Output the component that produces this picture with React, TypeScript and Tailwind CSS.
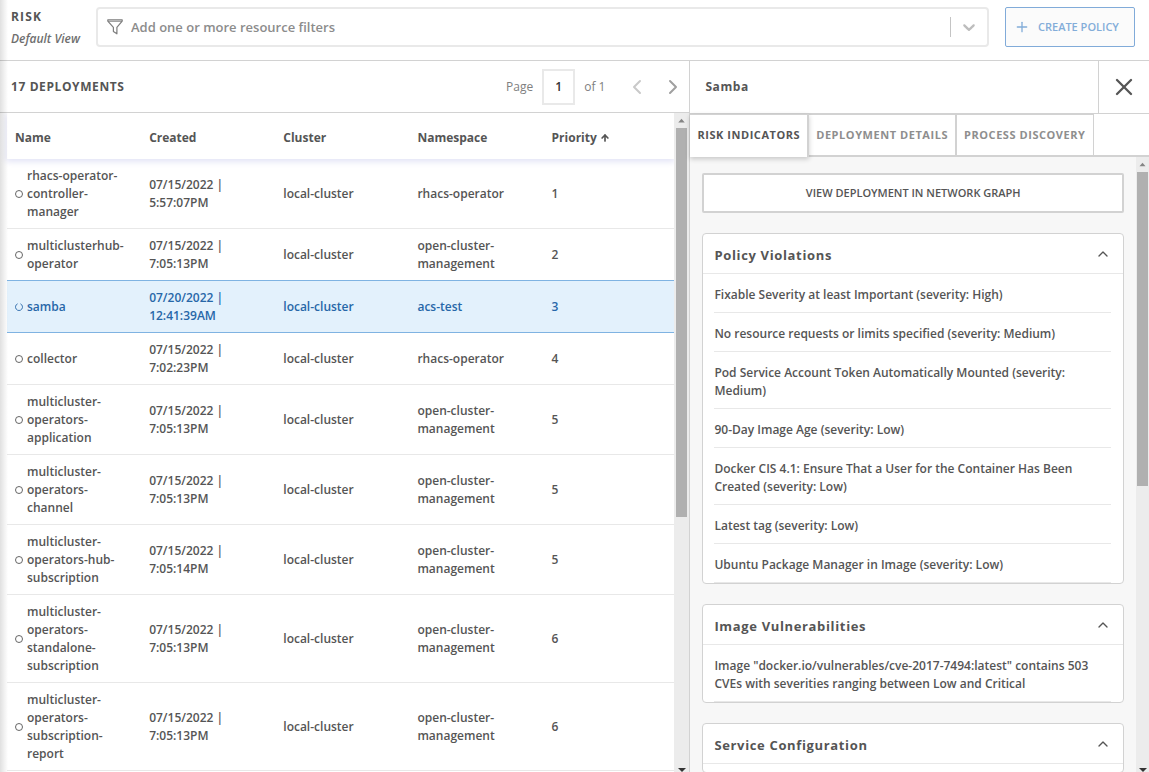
import React, { useState } from 'react';
import { clsx } from 'clsx';
import { ArrowUp, ChevronLeft, ChevronRight, ChevronUp, Plus, X } from 'lucide-react';

type Deployment = {
  name: string;
  date: string;
  time: string;
  cluster: string;
  namespace: string;
  priority: number;
};

const deployments: Deployment[] = [
  { name: 'rhacs-operator-controller-manager', date: '07/15/2022', time: '5:57:07PM', cluster: 'local-cluster', namespace: 'rhacs-operator', priority: 1 },
  { name: 'multiclusterhub-operator', date: '07/15/2022', time: '7:05:13PM', cluster: 'local-cluster', namespace: 'open-cluster-management', priority: 2 },
  { name: 'samba', date: '07/20/2022', time: '12:41:39AM', cluster: 'local-cluster', namespace: 'acs-test', priority: 3 },
  { name: 'collector', date: '07/15/2022', time: '7:02:23PM', cluster: 'local-cluster', namespace: 'rhacs-operator', priority: 4 },
  { name: 'multicluster-operators-application', date: '07/15/2022', time: '7:05:13PM', cluster: 'local-cluster', namespace: 'open-cluster-management', priority: 5 },
  { name: 'multicluster-operators-channel', date: '07/15/2022', time: '7:05:13PM', cluster: 'local-cluster', namespace: 'open-cluster-management', priority: 5 },
  { name: 'multicluster-operators-hub-subscription', date: '07/15/2022', time: '7:05:14PM', cluster: 'local-cluster', namespace: 'open-cluster-management', priority: 5 },
  { name: 'multicluster-operators-standalone-subscription', date: '07/15/2022', time: '7:05:13PM', cluster: 'local-cluster', namespace: 'open-cluster-management', priority: 6 },
  { name: 'multicluster-operators-subscription-report', date: '07/15/2022', time: '7:05:13PM', cluster: 'local-cluster', namespace: 'open-cluster-management', priority: 6 },
];

const riskGroups = [
  {
    title: 'Policy Violations',
    items: [
      'Fixable Severity at least Important (severity: High)',
      'No resource requests or limits specified (severity: Medium)',
      'Pod Service Account Token Automatically Mounted (severity: Medium)',
      '90-Day Image Age (severity: Low)',
      'Docker CIS 4.1: Ensure That a User for the Container Has Been Created (severity: Low)',
      'Latest tag (severity: Low)',
      'Ubuntu Package Manager in Image (severity: Low)',
    ],
  },
  {
    title: 'Image Vulnerabilities',
    items: ['Image "docker.io/vulnerables/cve-2017-7494:latest" contains 503 CVEs with severities ranging between Low and Critical'],
  },
  { title: 'Service Configuration', items: [] },
];

const tabs = ['Risk Indicators', 'Deployment Details', 'Process Discovery'];

function FilterIcon() {
  return (
    <svg className="h-4 w-4 shrink-0 text-[#7d7d7d]" viewBox="0 0 16 16" fill="none" stroke="currentColor" strokeWidth="1.2" strokeLinejoin="round">
      <path d="M.8.9h14.4v1.2L9.9 8.4v6.4L6.4 12.4V8.4L.8 2.1z" />
      <path d="M1 2.4h14" strokeWidth=".8" />
    </svg>
  );
}

function StatusIcon({ open }: { open: boolean }) {
  return (
    <svg className="h-2 w-2 shrink-0" viewBox="0 0 8 8" fill="none" stroke="currentColor" strokeWidth=".9">
      {open ? <path d="M2.6.8A3.5 3.5 0 1 0 5.4.8" /> : <circle cx="4" cy="4" r="3.5" />}
    </svg>
  );
}

function Scrollbar({ thumb, className }: { thumb: string; className?: string }) {
  return (
    <div aria-hidden="true" className={clsx('flex shrink-0 flex-col items-center overflow-hidden bg-[#ececec]', className)}>
      <svg className="h-[15px] w-full shrink-0" viewBox="0 0 15 16" fill="#858585">
        <path d="M4 10h7L7.5 6z" />
      </svg>
      <div className={clsx('w-[11px] bg-[#b0b0b0]', thumb)} />
      <svg className="mt-auto h-1 w-2 shrink-0" viewBox="0 0 8 4" fill="#333">
        <path d="M0 0h8L4 4z" />
      </svg>
    </div>
  );
}

function Header() {
  return (
    <header className="flex shrink-0 items-center border-b border-[#d2d2d2] pt-[7px] pr-3.5 pb-[13px] pl-[11px]">
      <div className="h-10 w-[85px] shrink-0 pt-px">
        <h1 className="font-bold tracking-widest uppercase">Risk</h1>
        <p className="mt-1 text-[#6f6f6f] italic">Default View</p>
      </div>
      <div className="flex h-10 min-w-0 flex-1 items-center rounded border-2 border-[#e9e9e9] pl-[9px]">
        <FilterIcon />
        <input
          type="text"
          aria-label="Resource filters"
          placeholder="Add one or more resource filters"
          className="ml-2 min-w-0 flex-1 bg-transparent text-[13px] outline-none placeholder:text-[#8c8c8c]"
        />
        <button type="button" aria-label="Open filters" className="flex h-5 w-[37px] items-center justify-center border-l border-[#c4c4c4] text-[#bdbdbd]">
          <svg className="h-5 w-5" viewBox="0 0 20 20" fill="currentColor">
            <path d="M4.516 7.548c0.436-0.446 1.043-0.481 1.576 0l3.908 3.747 3.908-3.747c0.533-0.481 1.141-0.446 1.574 0 0.436 0.445 0.408 1.197 0 1.615-0.406 0.418-4.695 4.502-4.695 4.502-0.217 0.223-0.502 0.335-0.787 0.335s-0.57-0.112-0.789-0.335c0 0-4.287-4.084-4.695-4.502s-0.436-1.17 0-1.615z" />
          </svg>
        </button>
      </div>
      <button type="button" className="ml-4 flex h-10 w-[130px] shrink-0 items-center gap-2 rounded-xs border border-[#81abd9] bg-[#fbfbfb] pl-2 text-[11px] text-[#83add9] uppercase">
        <Plus className="h-4 w-4" strokeWidth={2} />
        Create Policy
      </button>
    </header>
  );
}

function DeploymentTable({ selected, onSelect }: { selected: string; onSelect: (name: string) => void }) {
  return (
    <div className="flex min-h-0 flex-1">
      <div className="min-w-0 flex-1 overflow-hidden pl-[7px]">
        <table className="w-full table-fixed border-separate border-spacing-0 text-left">
          <thead>
            <tr className="shadow-[0_2px_6px_1px_#e4e5f6]">
              <th className="w-[20.1%] px-2 pt-4 pb-3">Name</th>
              <th className="w-[20.1%] px-2 pt-4 pb-3">Created</th>
              <th className="w-[20.1%] px-2 pt-4 pb-3">Cluster</th>
              <th className="w-[20.1%] px-2 pt-4 pb-3">Namespace</th>
              <th className="px-2 pt-4 pb-3">
                <span className="flex items-center gap-[3px]">
                  Priority <ArrowUp className="h-2.5 w-2.5" strokeWidth={4} />
                </span>
              </th>
            </tr>
          </thead>
          <tbody>
            {deployments.map((d, i) => {
              const active = d.name === selected;
              const edge = active || deployments[i + 1]?.name === selected;
              const cell = clsx('border-b px-2 pt-2 pb-[7px]', edge ? 'border-[#7fb3e2]' : 'border-[#e8e8e8]');
              return (
                <tr
                  key={d.name}
                  onClick={() => onSelect(d.name)}
                  className={clsx('cursor-pointer', active && 'bg-[#e3f1fc] text-[#2767a8]')}
                >
                  <td className={cell}>
                    <div className="flex items-center gap-1">
                      <StatusIcon open={active} />
                      <span className="min-w-0">{d.name}</span>
                    </div>
                  </td>
                  <td className={cell}>{d.date} | {d.time}</td>
                  <td className={cell}>{d.cluster}</td>
                  <td className={cell}>{d.namespace}</td>
                  <td className={cell}>{d.priority}</td>
                </tr>
              );
            })}
          </tbody>
        </table>
      </div>
      <Scrollbar className="w-[15px]" thumb="h-[59%]" />
    </div>
  );
}

function RiskCard({ title, items }: { title: string; items: string[] }) {
  const [open, setOpen] = useState(true);

  return (
    <section className="mt-5 rounded border border-[#d2d2d2] bg-white">
      <button
        type="button"
        aria-expanded={open}
        onClick={() => setOpen(!open)}
        className="flex h-10 w-full items-center justify-between border-b border-[#e8e8e8] pr-3 pl-[11px]"
      >
        <span className="pt-0.5 text-[13px] font-bold tracking-wider">{title}</span>
        <ChevronUp className={clsx('h-4 w-4', !open && 'rotate-180')} strokeWidth={2} />
      </button>
      {open && (
        <ul className="min-h-2 pr-3 pl-[11px]">
          {items.map((item) => (
            <li key={item} className="border-b border-[#e8e8e8] pt-3 pb-2">{item}</li>
          ))}
        </ul>
      )}
    </section>
  );
}

function DetailsPanel() {
  const [tab, setTab] = useState(tabs[0]);

  return (
    <aside className="flex w-2/5 shrink-0 flex-col border-l border-[#d2d2d2]">
      <div className="flex h-[53px] shrink-0 items-center border-b border-[#d2d2d2]">
        <h2 className="flex-1 pl-[15px] font-bold tracking-wider">Samba</h2>
        <button type="button" aria-label="Close" className="flex h-full w-[51px] items-center justify-center border-l border-[#d2d2d2]">
          <X className="h-7 w-7" strokeWidth={2} />
        </button>
      </div>
      <div role="tablist" className="flex h-[43px] shrink-0 border-b-2 border-[#d2d2d2]">
        {tabs.map((t, i) => (
          <button
            key={t}
            type="button"
            role="tab"
            aria-selected={t === tab}
            onClick={() => setTab(t)}
            className={clsx(
              'border-t border-[#d2d2d2] px-[7px] text-[11px] font-bold tracking-wider whitespace-nowrap uppercase',
              i < tabs.length - 1 ? 'border-r-2' : 'border-r',
              t === tab ? 'relative -mb-0.5 bg-white pb-0.5 shadow-[0_2px_5px_#00000033]' : 'text-[#8e8e8e]'
            )}
          >
            {t}
          </button>
        ))}
      </div>
      <div className="flex min-h-0 flex-1 bg-[#f7f7f7]">
        <div className="min-w-0 flex-1 overflow-hidden px-3 pt-4">
          <a href="#network" className="flex h-10 items-center justify-center rounded-xs border-2 border-[#d2d2d2] bg-white text-[11px] uppercase">
            View Deployment in Network Graph
          </a>
          {riskGroups.map((g) => (
            <RiskCard key={g.title} title={g.title} items={g.items} />
          ))}
        </div>
        <Scrollbar className="w-[13px]" thumb="h-[51%]" />
      </div>
    </aside>
  );
}

export default function App() {
  const [selected, setSelected] = useState('samba');

  return (
    <div className="relative flex h-screen flex-col overflow-hidden bg-white font-['Open_Sans',sans-serif] text-[12px] leading-[18px] font-semibold text-[#555555]">
      <Header />
      <main className="flex min-h-0 flex-1">
        <div className="flex min-w-0 flex-1 flex-col">
          <div className="flex h-[52px] shrink-0 items-center border-b border-[#d2d2d2] pr-1 pl-[11px]">
            <h2 className="flex-1 font-bold tracking-wider uppercase">17 Deployments</h2>
            <label htmlFor="page" className="font-normal text-[#808080]">Page</label>
            <input id="page" type="text" defaultValue="1" className="mx-[9px] h-9 w-[33px] border-2 border-[#e9e9e9] text-center text-[#333]" />
            <span className="font-normal text-[#808080]">of 1</span>
            <button type="button" aria-label="Previous page" disabled className="ml-5 text-[#c9c9c9]">
              <ChevronLeft className="h-6 w-6" strokeWidth={2} />
            </button>
            <button type="button" aria-label="Next page" className="ml-3 text-[#a0a0a0]">
              <ChevronRight className="h-6 w-6" strokeWidth={2} />
            </button>
          </div>
          <DeploymentTable selected={selected} onSelect={setSelected} />
        </div>
        <DetailsPanel />
      </main>
      <div className="pointer-events-none absolute inset-y-0 left-0 w-2 bg-linear-to-r from-black/12 to-transparent" />
    </div>
  );
}
